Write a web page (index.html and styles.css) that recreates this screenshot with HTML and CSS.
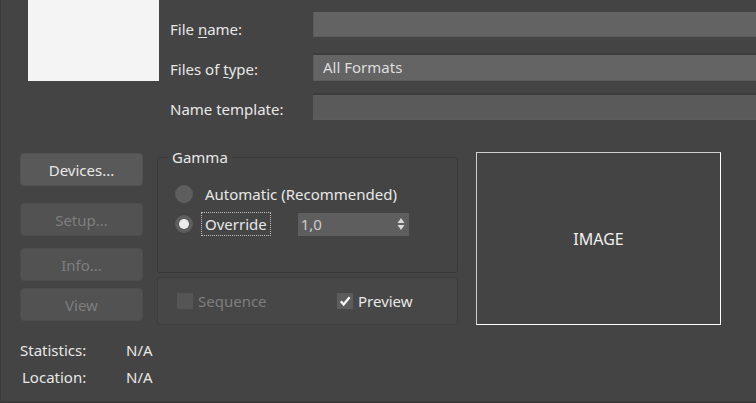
FILE: index.html
```html
<!DOCTYPE html>
<html lang="en">
<head>
  <meta charset="UTF-8">
  <title>Save Image</title>
  <link rel="stylesheet" href="styles.css">
</head>
<body>
  <div class="dialog">
    <!-- Top: thumbnail + file fields -->
    <div class="top">
      <div class="thumb"></div>
      <div class="labels">
        <div class="label">File <u>n</u>ame:</div>
        <div class="label">Files of <u>t</u>ype:</div>
        <div class="label">Name template:</div>
      </div>
      <div class="fields">
        <div class="field field-name"></div>
        <div class="field field-type">All Formats</div>
        <div class="field field-template"></div>
      </div>
    </div>

    <!-- Middle: buttons, gamma, preview -->
    <div class="middle">
      <div class="side">
        <button class="btn btn-devices" type="button">Devices...</button>
        <button class="btn btn-setup" type="button" disabled>Setup...</button>
        <button class="btn btn-info" type="button" disabled>Info...</button>
        <button class="btn btn-view" type="button" disabled>View</button>

        <div class="stats">
          <div class="stat stat-statistics"><span class="stat-key">Statistics:</span><span class="stat-val">N/A</span></div>
          <div class="stat stat-location"><span class="stat-key">Location:</span><span class="stat-val">N/A</span></div>
        </div>
      </div>

      <div class="center">
        <div class="group">
          <div class="group-title">Gamma</div>
          <div class="radio-row">
            <span class="radio"></span>
            <span class="radio-label">Automatic (Recommended)</span>
          </div>
          <div class="radio-row">
            <span class="radio radio-on"></span>
            <span class="radio-label focus">Override</span>
            <div class="spin">
              <span>1,0</span>
              <svg class="spin-arrows" viewBox="0 0 8 14" width="8" height="14">
                <path d="M4 1 L7.5 6 L0.5 6 Z" fill="#d8d8d8"/>
                <path d="M4 13 L7.5 8 L0.5 8 Z" fill="#d8d8d8"/>
              </svg>
            </div>
          </div>
        </div>

        <div class="options">
          <div class="check check-disabled">
            <span class="box"></span>
            <span>Sequence</span>
          </div>
          <div class="check">
            <span class="box box-on">
              <svg viewBox="0 0 12 12" width="12" height="12">
                <path d="M1.8 6.2 L4.6 9.4 L10.6 2.2" fill="none" stroke="#f4f4f4" stroke-width="2.4"/>
              </svg>
            </span>
            <span>Preview</span>
          </div>
        </div>
      </div>

      <div class="image">IMAGE</div>
    </div>
  </div>
</body>
</html>
```

FILE: styles.css
```css
/* Base */
* {
  margin: 0;
  padding: 0;
  box-sizing: border-box;
}

body {
  width: 756px;
  height: 403px;
  overflow: hidden;
  background: #444444;
  font-family: "Noto Sans", "Open Sans", sans-serif;
  font-size: 15px;
  color: #e8e8e8;
}

.dialog {
  height: 403px;
  border-left: 1px solid #3a3a3a;
  border-bottom: 2px solid #3a3a3a;
}

u {
  text-decoration-thickness: 1px;
  text-underline-offset: 2px;
}

/* Top section */
.top {
  display: flex;
  height: 142px;
}

.thumb {
  width: 131px;
  height: 81px;
  margin-left: 27px;
  background: #f4f4f4;
}

.labels {
  width: 143px;
  flex-shrink: 0;
  padding-top: 9px;
  margin-left: 11px;
}

.label {
  height: 40px;
  line-height: 40px;
}

.fields {
  flex: 1;
  padding-top: 12px;
}

.field {
  height: 25px;
  background: #636363;
  border-left: 1px solid #5a5a5a;
  border-bottom: 1px solid #5c5c5c;
  color: #dedede;
  padding-left: 9px;
  line-height: 25px;
}

.field-type {
  height: 26px;
  margin-top: 18px;
  background: #646464;
  box-shadow: 0 -2px 0 #3c3c3c;
}

.field-template {
  margin-top: 14px;
  background: #5a5a5a;
  box-shadow: 0 -2px 0 #3c3c3c;
}

/* Middle section */
.middle {
  display: flex;
  padding-top: 10px;
}

.side {
  width: 123px;
  flex-shrink: 0;
  margin-left: 19px;
  display: flex;
  flex-direction: column;
}

.btn {
  height: 33px;
  border: 1px solid #525252;
  border-radius: 4px;
  background: #595959;
  color: #e8e8e8;
  font-family: inherit;
  font-size: 15px;
}

.btn:disabled {
  background: #525252;
  border-color: #4d4d4d;
  color: #7e7e7e;
}

.btn-devices { margin-top: 1px; }
.btn-setup { margin-top: 17px; }
.btn-info { margin-top: 12px; }
.btn-view { margin-top: 7px; }

.stats {
  margin-top: 16px;
}

.stat {
  display: flex;
  height: 27px;
  line-height: 27px;
}

.stat-key {
  width: 106px;
  flex-shrink: 0;
}

.stat-location .stat-key {
  padding-left: 2px;
}

/* Gamma group */
.center {
  width: 301px;
  flex-shrink: 0;
  margin-left: 14px;
  margin-top: 5px;
}

.group {
  position: relative;
  height: 116px;
  border: 1px solid #393939;
  border-radius: 3px;
  padding-top: 21px;
  padding-left: 17px;
}

.group-title {
  position: absolute;
  top: -11px;
  left: 9px;
  padding: 0 5px;
  background: #444444;
  line-height: 20px;
}

.radio-row {
  display: flex;
  align-items: center;
  height: 30px;
}

.radio {
  width: 18px;
  height: 18px;
  border-radius: 50%;
  background: #5e5e5e;
  flex-shrink: 0;
  display: flex;
  align-items: center;
  justify-content: center;
}

.radio-on::after {
  content: "";
  width: 10px;
  height: 10px;
  border-radius: 50%;
  background: #ececec;
}

.radio-label {
  margin-left: 12px;
  line-height: 20px;
}

.focus {
  margin-left: 9px;
  padding: 1px 3px;
  outline: 1px dotted #bdbdbd;
}

.spin {
  display: flex;
  align-items: center;
  justify-content: space-between;
  width: 111px;
  height: 23px;
  margin-left: 28px;
  padding: 0 4px 0 3px;
  background: #5e5e5e;
  color: #cfcfcf;
}

/* Sequence / Preview */
.options {
  display: flex;
  align-items: center;
  height: 48px;
  margin-top: 4px;
  padding-left: 19px;
  background: #474747;
  border: 1px solid #3d3d3d;
  border-radius: 3px;
}

.check {
  display: flex;
  align-items: center;
  gap: 5px;
}

.check-disabled {
  width: 160px;
  color: #7e7e7e;
}

.box {
  width: 16px;
  height: 16px;
  background: #555555;
  display: flex;
  align-items: center;
  justify-content: center;
}

.box-on {
  background: #5c5c5c;
}

/* Preview image */
.image {
  width: 245px;
  height: 173px;
  flex-shrink: 0;
  margin-left: 18px;
  border: 1px solid #cfcfcf;
  border-right-color: #ffffff;
  border-bottom-color: #ffffff;
  display: flex;
  align-items: center;
  justify-content: center;
  font-size: 16px;
  color: #f0f0f0;
}
```
